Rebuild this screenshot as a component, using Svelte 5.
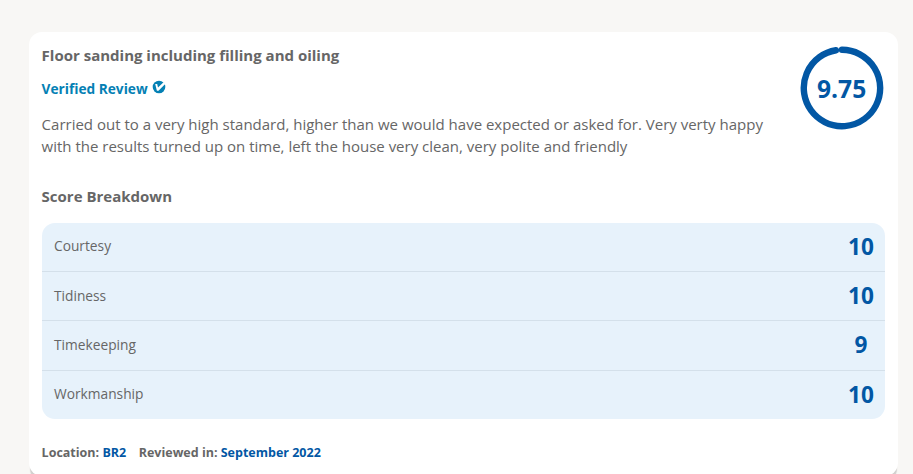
<script>
  const score = '9.75';
  const breakdown = [
    { label: 'Courtesy', value: 10 },
    { label: 'Tidiness', value: 10 },
    { label: 'Timekeeping', value: 9 },
    { label: 'Workmanship', value: 10 }
  ];
</script>

<main class="page">
  <article class="card">
    <header class="top">
      <div class="summary">
        <h2 class="title">Floor sanding including filling and oiling</h2>
        <div class="verified">
          <span>Verified Review</span>
          <svg class="tick" viewBox="0 0 14 14" aria-hidden="true">
            <circle cx="7" cy="7" r="6.3" fill="#0480b4" />
            <path d="M3.2 4H5.2L6 7.6L11.8 2L13.2 3.9L6.5 10.8H4.9Z" fill="#fff" />
          </svg>
        </div>
        <p class="comment">
          Carried out to a very high standard, higher than we would have expected or asked for. Very verty happy<br />
          with the results turned up on time, left the house very clean, very polite and friendly
        </p>
      </div>
      <div class="gauge">
        <svg viewBox="0 0 84 84" aria-hidden="true">
          <path d="M42 3.8A38.2 38.2 0 1 1 36 4.27" class="ring" />
        </svg>
        <span class="score">{score}</span>
      </div>
    </header>

    <h3 class="subtitle">Score Breakdown</h3>
    <ul class="panel">
      {#each breakdown as item}
        <li class="row">
          <span>{item.label}</span>
          <strong>{item.value}</strong>
        </li>
      {/each}
    </ul>

    <footer class="meta">
      <span>Location: <b>BR2</b></span>
      <span>Reviewed in: <b>September 2022</b></span>
    </footer>
  </article>
</main>

<style>
  .page {
    box-sizing: border-box;
    height: 474px;
    overflow: hidden;
    padding: 32px 15px 0 29px;
    background: #f8f7f5;
    color: #666;
    font-family: 'Open Sans', sans-serif;
  }
  .card {
    box-sizing: border-box;
    height: 444px;
    padding: 12px 13px 0 12.6px;
    border-radius: 13px;
    background: #fff;
    box-shadow: 0 6px 1px -1px rgba(0, 0, 0, 0.16);
  }
  .top {
    display: flex;
    justify-content: space-between;
    height: 141px;
  }
  .summary {
    white-space: nowrap;
  }
  .title {
    margin: 0;
    font-size: 15px;
    font-weight: 700;
    line-height: 22px;
  }
  .verified {
    display: flex;
    gap: 4px;
    margin-top: 12px;
    color: #0480b4;
    font-size: 13.7px;
    font-weight: 700;
    line-height: 22px;
  }
  .tick {
    width: 14px;
    height: 14px;
    margin-top: 2px;
  }
  .comment {
    margin: 13px 0 0;
    font-size: 15px;
    line-height: 22px;
  }
  .gauge {
    display: grid;
    width: 84px;
    height: 84px;
    margin: 2px 1.4px 0 0;
  }
  .gauge svg,
  .score {
    grid-area: 1 / 1;
  }
  .gauge svg {
    width: 84px;
    height: 84px;
  }
  .ring {
    fill: none;
    stroke: #0257a4;
    stroke-width: 6.4;
    stroke-linecap: round;
  }
  .score {
    place-self: center;
    padding-top: 2px;
    color: #0257a4;
    font-size: 24.6px;
    font-weight: 700;
    line-height: 32px;
  }
  .subtitle {
    margin: 0;
    font-size: 15px;
    font-weight: 700;
    line-height: 22px;
  }
  .panel {
    margin: 16px 0 0;
    padding: 0;
    overflow: hidden;
    border-radius: 13px;
    background: #e7f2fb;
    list-style: none;
  }
  .row {
    box-sizing: border-box;
    display: flex;
    align-items: center;
    justify-content: space-between;
    height: 49px;
    padding: 0 11px 0 12.4px;
    border-bottom: 1px solid #d4e0ea;
    font-size: 13.75px;
  }
  .row span {
    padding-bottom: 3px;
  }
  .row:nth-child(2) span {
    padding-bottom: 1px;
  }
  .row:nth-child(3) {
    height: 50px;
  }
  .row:last-child {
    height: 48px;
    border-bottom: 0;
  }
  .row strong {
    width: 26px;
    padding-bottom: 1px;
    color: #0257a4;
    font-size: 22.6px;
    font-weight: 700;
    line-height: 30px;
    text-align: center;
  }
  .meta {
    display: flex;
    gap: 12.5px;
    margin-top: 24px;
    font-size: 12.5px;
    font-weight: 700;
    line-height: 20px;
  }
  .meta b {
    color: #0257a4;
    font-weight: 700;
  }
</style>
